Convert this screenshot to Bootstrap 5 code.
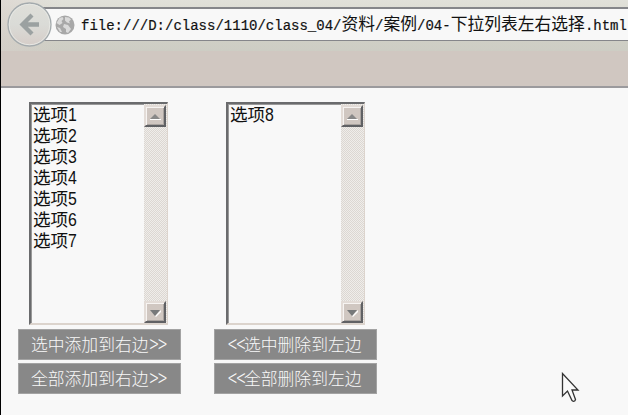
<!DOCTYPE html>
<html lang="zh-CN">
<head>
<meta charset="utf-8">
<title>下拉列表左右选择</title>
<link href="https://cdn.jsdelivr.net/npm/bootstrap@5.3.0/dist/css/bootstrap.min.css" rel="stylesheet">
<style>
body{height:415px;background:#f8f8f8;border-left:1px solid #000;font-family:"Liberation Sans","Noto Sans CJK SC",sans-serif;color:#111}
.toolbar{height:51px;background:linear-gradient(90deg,rgba(218,208,204,.45),transparent 60px),linear-gradient(#e1e1da,#dcdcd3 25%,#cfcfc5 80%,#cdcdc4);padding:2px 0 0 6px}
.back-btn{width:45px;height:45px;flex:none;z-index:1}
.address{height:34px;margin:5px 0 0 -10px;padding-left:13px;background:#f8f8f8;border:solid #85868a;border-width:2px 0 1px;min-width:0}
.globe{width:20px;height:20px;flex:none}
.url{font:14px/30px "Liberation Mono",monospace;margin-left:6px;white-space:pre;-webkit-text-stroke:.2px #111}
.url span{font:16.8px/30px "Noto Sans CJK SC",sans-serif;-webkit-text-stroke:0}
.band{height:37px;background:#d0c7c1;border-bottom:2px solid #9b9a9d}
.picker{padding:14px 0 0 17px;gap:33px}
.side{width:163px}
.listbox{width:139px;height:223px;margin-left:11px;border:2px solid;border-color:#6a6b6d #dcd4cd #dcd4cd #6a6b6d;border-right-width:1px;box-shadow:inset 1px 1px #999}
.side + .side .listbox{margin-left:12px}
.options{font-size:17.6px;line-height:21px;padding:1px 0 0 2px}
.options span{display:inline-block;transform:scaleX(.9);transform-origin:left}
.track{width:23px;background:repeating-conic-gradient(#dcd7d2 0 25%,#efedea 0 50%) 0 0/2px 2px;padding:1px 1px 0 0}
.arrow{width:22px;height:22px;background:#d0c7c1;border:2px solid;border-color:#e3dcd7 #606164 #606164 #e3dcd7;box-shadow:inset 1px 1px #f7f4f2,inset -1px -1px #aaa4a0}
.move{height:31px;border:1px solid #a3a3a3;background:#888;color:#f8f8f8;font:300 16.8px/29px "Noto Sans CJK SC",sans-serif;padding:0 12px;white-space:nowrap}
.move + .move{margin-top:3px}
.chev{flex:none;width:17px;letter-spacing:-.6px;transform:translate(1px,-1px) scaleY(1.45)}
.pointer{left:560px;top:372px;width:20px;height:32px}
</style>
<script src="https://cdn.jsdelivr.net/npm/bootstrap@5.3.0/dist/js/bootstrap.bundle.min.js"></script>
</head>
<body class="overflow-hidden position-relative">
<header>
<div class="toolbar d-flex align-items-start">
<svg class="back-btn position-relative" viewBox="0 0 45 45"><defs><linearGradient id="g" x2="0" y2="1"><stop stop-color="#dfdfd9"/><stop offset=".5" stop-color="#dadbd7"/><stop offset="1" stop-color="#d6cdc8"/></linearGradient></defs><circle cx="22.5" cy="22.5" r="21.5" fill="url(#g)" stroke="#a3aaad" stroke-width="1.3"/><circle cx="22.5" cy="22.5" r="20.2" fill="none" stroke="#e6e7e3"/><path d="M32 22.5H16M25 13L15.5 22.5L25 32" fill="none" stroke="#9ba1a1" stroke-width="4.3"/></svg>
<div class="address d-flex align-items-center flex-grow-1 overflow-hidden">
<svg class="globe" viewBox="0 0 20 20"><circle cx="10" cy="10" r="9.5" fill="#a8a8a8"/><path d="M1.500 8l3-5 3-1 1 2-2 2 1 2-3 2zM10 2l4 .5 2 2-2 2 1 2-3-1-2-2zM9 9l4 1 3 4-3 4-2-1 0-3-3-2zM2 12l3 1 2 4-2 0z" fill="#dadada"/></svg>
<div class="url">file:///D:/class/1110/class_04/<span>资料</span>/<span>案例</span>/04-<span>下拉列表左右选择</span>.html</div>
</div>
</div>
<div class="band"></div>
</header>
<main class="picker d-flex">
<section class="side">
<div class="listbox d-flex">
<ul class="options list-unstyled mb-0 flex-grow-1"><li>选项<span>1</span></li><li>选项<span>2</span></li><li>选项<span>3</span></li><li>选项<span>4</span></li><li>选项<span>5</span></li><li>选项<span>6</span></li><li>选项<span>7</span></li></ul>
<div class="track d-flex flex-column justify-content-between"><svg class="arrow" viewBox="0 0 18 18"><path d="M4 13h11v-1H4z" fill="#fff"/><path d="M4 12l5-5 5 5z" fill="#888"/></svg><svg class="arrow" viewBox="0 0 18 18"><path d="M9 13l6-6v2l-5 5z" fill="#fff"/><path d="M4 7h10l-5 6z" fill="#77797a"/></svg></div>
</div>
<button class="move d-flex align-items-center w-100 rounded-0 mt-1">选中添加到右边<span class="chev">&gt;&gt;</span></button>
<button class="move d-flex align-items-center w-100 rounded-0">全部添加到右边<span class="chev">&gt;&gt;</span></button>
</section>
<section class="side">
<div class="listbox d-flex">
<ul class="options list-unstyled mb-0 flex-grow-1"><li>选项<span>8</span></li></ul>
<div class="track d-flex flex-column justify-content-between"><svg class="arrow" viewBox="0 0 18 18"><path d="M4 13h11v-1H4z" fill="#fff"/><path d="M4 12l5-5 5 5z" fill="#888"/></svg><svg class="arrow" viewBox="0 0 18 18"><path d="M9 13l6-6v2l-5 5z" fill="#fff"/><path d="M4 7h10l-5 6z" fill="#77797a"/></svg></div>
</div>
<button class="move d-flex align-items-center w-100 rounded-0 mt-1"><span class="chev">&lt;&lt;</span>选中删除到左边</button>
<button class="move d-flex align-items-center w-100 rounded-0"><span class="chev">&lt;&lt;</span>全部删除到左边</button>
</section>
</main>
<svg class="pointer position-absolute" viewBox="0 0 20 32"><path d="M1.500 1.500V24l5-5 4.500 9.500q2.500 2 3.500-1L11 18h6z" fill="#fafafa" stroke="#333" stroke-width="1.3"/></svg>
</body>
</html>
